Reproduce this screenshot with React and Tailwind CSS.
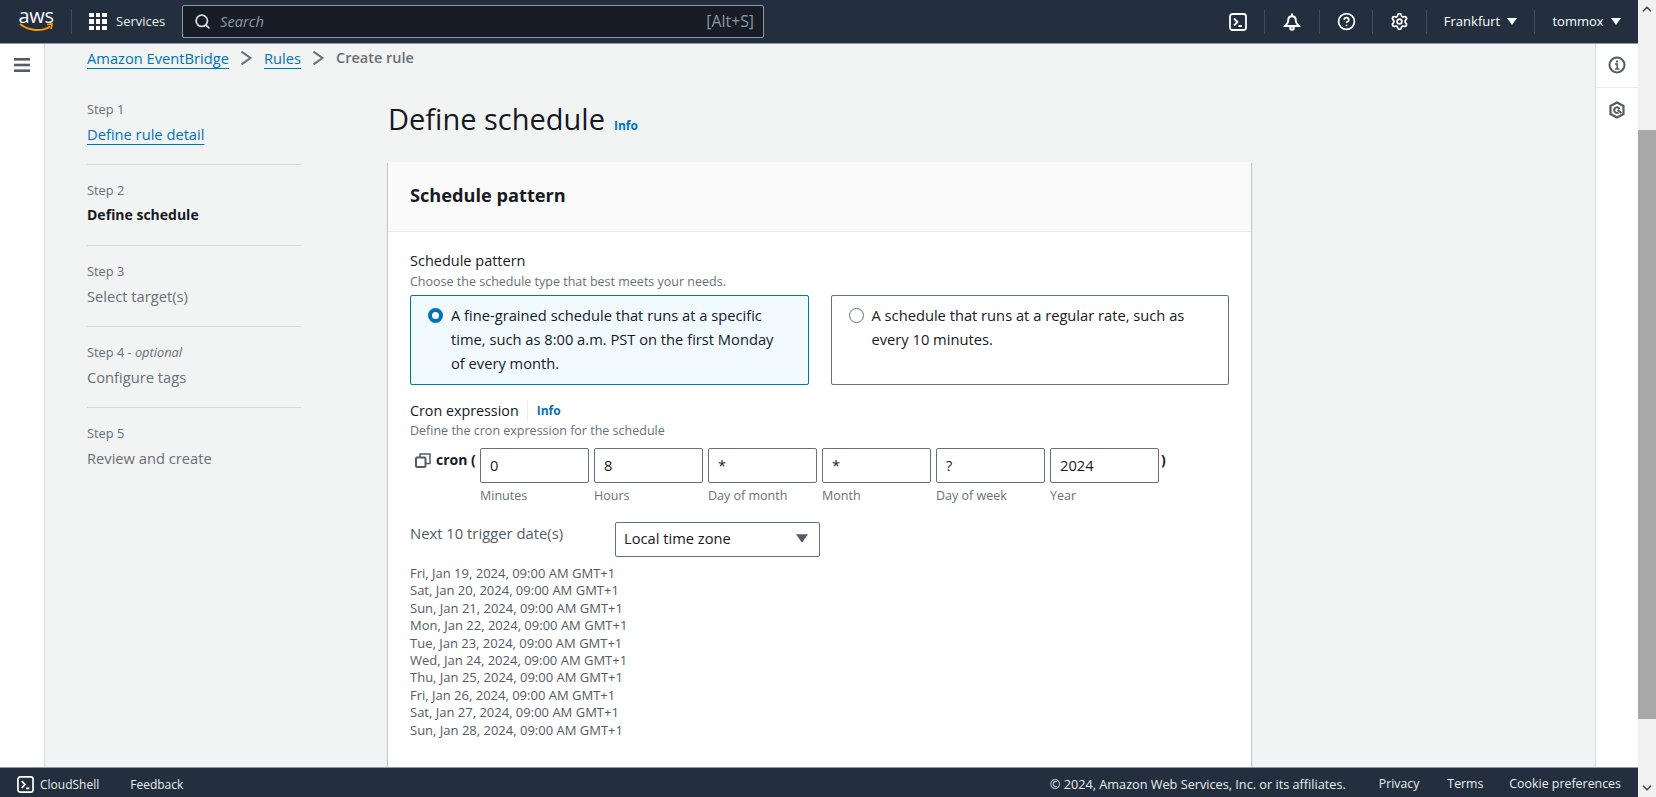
import React from 'react';
import { Search, HelpCircle, Settings, ChevronUp, ChevronDown } from 'lucide-react';

const steps = [
  { step: 'Step 1', label: 'Define rule detail', state: 'link' },
  { step: 'Step 2', label: 'Define schedule', state: 'active' },
  { step: 'Step 3', label: 'Select target(s)' },
  { step: 'Step 4', optional: true, label: 'Configure tags' },
  { step: 'Step 5', label: 'Review and create' },
];

const cronFields = [
  { value: '0', label: 'Minutes' },
  { value: '8', label: 'Hours' },
  { value: '*', label: 'Day of month' },
  { value: '*', label: 'Month' },
  { value: '?', label: 'Day of week' },
  { value: '2024', label: 'Year' },
];

const dates = [
  'Fri, Jan 19, 2024, 09:00 AM GMT+1',
  'Sat, Jan 20, 2024, 09:00 AM GMT+1',
  'Sun, Jan 21, 2024, 09:00 AM GMT+1',
  'Mon, Jan 22, 2024, 09:00 AM GMT+1',
  'Tue, Jan 23, 2024, 09:00 AM GMT+1',
  'Wed, Jan 24, 2024, 09:00 AM GMT+1',
  'Thu, Jan 25, 2024, 09:00 AM GMT+1',
  'Fri, Jan 26, 2024, 09:00 AM GMT+1',
  'Sat, Jan 27, 2024, 09:00 AM GMT+1',
  'Sun, Jan 28, 2024, 09:00 AM GMT+1',
];

function ShellIcon({ size = 18 }) {
  return (
    <svg width={size} height={size} viewBox="0 0 18 18" fill="none" stroke="#fff" strokeWidth="1.8">
      <rect x="1" y="1" width="16" height="16" rx="2.500" />
      <path d="M5 5.500 8.500 9 5 12.500M9.500 13H13" />
    </svg>
  );
}

function BellIcon() {
  return (
    <svg width="18" height="18" viewBox="0 0 18 18" fill="none" stroke="#fff" strokeWidth="2">
      <path d="M9 3.200c-2.800 0-3.800 2-3.800 4.300 0 2.700-1.700 4-3 5.500h13.600c-1.300-1.500-3-2.800-3-5.500C12.800 5.200 11.800 3.200 9 3.200zM9 .5v2.700" />
      <circle cx="9" cy="15" r="1.800" />
    </svg>
  );
}

function InfoIcon() {
  return (
    <svg width="18" height="18" viewBox="0 0 18 18" fill="none" stroke="#545b64" strokeWidth="2">
      <circle cx="9" cy="9" r="7.500" />
      <rect x="8" y="4.500" width="2" height="2" fill="#545b64" stroke="none" />
      <path d="M7 8h2.200v4.500M7 13h4.500" strokeWidth="1.600" />
    </svg>
  );
}

function HexIcon() {
  return (
    <svg width="18" height="18" viewBox="0 0 18 18" fill="none" stroke="#545b64" strokeWidth="2.200">
      <path d="M9 1.500 15.500 5v8L9 16.500 2.500 13V5z" />
      <path d="M11.500 8a2.800 2.800 0 1 0-1 3.500M9.500 9l4 3" strokeWidth="2" />
    </svg>
  );
}

function CopyIcon() {
  return (
    <svg width="16" height="15" viewBox="0 0 16 15" fill="none" stroke="#545b64" strokeWidth="2" className="shrink-0 mt-[3px]">
      <rect x="1" y="4.500" width="9.500" height="9.500" rx="1" />
      <path d="M5 4V1h10v9.500h-4" strokeWidth="1.500" />
    </svg>
  );
}

function Crumb() {
  return (
    <svg width="35" height="14" viewBox="0 0 35 14" fill="none" stroke="#687078" strokeWidth="2" className="shrink-0">
      <path d="M12.500 .6 21.500 7l-9 6.400" />
    </svg>
  );
}

function Caret({ className = 'fill-white', w = 10, h = 7 }) {
  return (
    <svg width={w} height={h} viewBox="0 0 10 7" className={className}>
      <path d="M0 0h10L5 7z" />
    </svg>
  );
}

function Divider() {
  return <div className="w-px h-[24px] bg-[#414d5c]" />;
}

function TopBar() {
  return (
    <header className="h-[44px] shrink-0 bg-[#232f3e] border-b border-[#8d99a8] flex items-center text-white text-[13px]">
      <div className="ml-[19px] w-[34px] flex flex-col items-center">
        <span className="text-[20px] leading-[14px] mt-[-3px] tracking-[-0.3px]">aws</span>
        <svg width="34" height="9" viewBox="0 0 34 9" fill="none">
          <path d="M1 1c9 7 22 8 30 2.500" stroke="#f90" strokeWidth="2" />
          <path d="M28 1.500 33 1l-1 5" stroke="#f90" strokeWidth="1.700" />
        </svg>
      </div>
      <div className="ml-[18px] w-px h-[25px] bg-[#414d5c]" />
      <div className="ml-[17px] grid grid-cols-3 gap-[2px] w-[18px]">
        {[...Array(9)].map((_, i) => <span key={i} className="w-[4.600px] h-[4.600px] bg-white" />)}
      </div>
      <span className="ml-[9px] w-[48px] whitespace-nowrap text-[13px] text-[#eaeded]">Services</span>
      <div className="ml-[18px] w-[582px] h-[33px] bg-[#161d26] border border-[#8d99a8] rounded-[2px] flex items-center pl-[11px] pr-[9px] text-[#8d99a8]">
        <Search size={17} strokeWidth={2.500} className="text-[#d5dbdb]" />
        <span className="ml-[9px] italic text-[14.700px]">Search</span>
        <span className="ml-auto text-[15.800px]">[Alt+S]</span>
      </div>
      <div className="ml-auto flex items-center">
        <div className="w-[52px] flex justify-center"><ShellIcon /></div>
        <Divider />
        <div className="w-[54px] flex justify-center"><BellIcon /></div>
        <Divider />
        <div className="w-[52px] flex justify-center"><HelpCircle size={19} strokeWidth={2.200} /></div>
        <Divider />
        <div className="w-[53px] flex justify-center"><Settings size={19} strokeWidth={2.200} /></div>
        <Divider />
        <div className="w-[107px] flex justify-center items-center gap-[7px]">Frankfurt <Caret /></div>
        <Divider />
        <div className="w-[103px] flex justify-center items-center gap-[7px]">tommox <Caret /></div>
      </div>
    </header>
  );
}

function Steps() {
  return (
    <nav className="w-[214px] shrink-0 mt-[27px]">
      {steps.map((s, i) => (
        <div
          key={s.step}
          className={i === 0 ? 'h-[66px] border-b border-[#d5dbdb]' : i < steps.length - 1 ? 'h-[81px] pt-[15px] border-b border-[#d5dbdb]' : 'h-[81px] pt-[15px]'}
        >
          <div className="text-[12.800px] leading-[20px] text-[#687078]">
            {s.step}{s.optional && <span className="italic"> - optional</span>}
          </div>
          <div className={`mt-[5px] leading-[20px] ${s.state === 'link' ? 'text-[14.700px] text-[#0073bb] underline underline-offset-[4px]' : s.state === 'active' ? 'text-[14px] font-bold text-[#16191f]' : 'text-[14.700px] text-[#687078]'}`}>
            {s.label}
          </div>
        </div>
      ))}
    </nav>
  );
}

function RadioCard({ selected, children }) {
  return (
    <div className={`flex-1 h-[90px] rounded-[2px] border pl-[17px] pr-[24px] pt-[7px] flex gap-[8px] text-[14.700px] leading-[24px] text-[#16191f] ${selected ? 'border-[#0073bb] bg-[#f1faff]' : 'border-[#687078] bg-white'}`}>
      {selected
        ? <span className="mt-[5px] w-[15px] h-[15px] shrink-0 rounded-full border-[4px] border-[#0073bb] bg-white" />
        : <span className="mt-[5px] w-[15px] h-[15px] shrink-0 rounded-full border border-[#687078] bg-white" />}
      <p>{children}</p>
    </div>
  );
}

function SchedulePanel() {
  return (
    <section className="w-[863px] bg-white shadow-[0_1px_1px_0_rgba(0,28,36,0.3),1px_1px_1px_0_rgba(0,28,36,0.15),-1px_1px_1px_0_rgba(0,28,36,0.15)]">
      <div className="h-[70px] bg-[#fafafa] border-b border-[#eaeded] pl-[22px] pb-[2px] flex items-center">
        <h2 className="text-[18.200px] font-bold text-[#16191f]">Schedule pattern</h2>
      </div>
      <div className="px-[22px] pt-[19px] pb-[80px]">
        <div className="text-[14.500px] leading-[20px] text-[#16191f]">Schedule pattern</div>
        <div className="text-[12.500px] leading-[16px] mt-[3px] text-[#687078]">Choose the schedule type that best meets your needs.</div>
        <div className="flex gap-[22px] mt-[5px]">
          <RadioCard selected>A fine-grained schedule that runs at a specific time, such as 8:00 a.m. PST on the first Monday of every month.</RadioCard>
          <RadioCard>A schedule that runs at a regular rate, such as every 10 minutes.</RadioCard>
        </div>

        <div className="mt-[16px] flex items-center text-[14.300px] leading-[20px] text-[#16191f]">
          Cron expression
          <span className="ml-[8px] pl-[9px] border-l border-[#eaeded] text-[12px] font-bold text-[#0073bb]">Info</span>
        </div>
        <div className="text-[12.500px] leading-[16px] mt-[2px] text-[#687078]">Define the cron expression for the schedule</div>

        <div className="flex mt-[9px] pl-[5px]">
          <div className="flex items-start gap-[5px] w-[65px] pt-[2px] text-[14px] font-bold leading-[20px] text-[#16191f]">
            <CopyIcon />
            <span>cron (</span>
          </div>
          <div className="flex gap-[5px]">
            {cronFields.map((f) => (
              <div key={f.label} className="w-[109px]">
                <div className="h-[35px] rounded-[2px] border border-[#687078] bg-white pl-[9px] flex items-center text-[14.700px] text-[#16191f]">{f.value}</div>
                <div className="mt-[5px] text-[12.500px] leading-[16px] text-[#687078]">{f.label}</div>
              </div>
            ))}
          </div>
          <span className="ml-[2px] pt-[2px] text-[14px] font-bold leading-[20px] text-[#16191f]">)</span>
        </div>

        <div className="flex mt-[18px]">
          <div className="w-[205px] pt-[1px] text-[14.800px] leading-[20px] text-[#545b64]">Next 10 trigger date(s)</div>
          <div className="w-[205px] h-[35px] rounded-[2px] border border-[#687078] bg-white pl-[8px] pr-[11px] pb-[2px] flex items-center justify-between text-[14.700px] text-[#16191f]">
            Local time zone
            <Caret className="fill-[#545b64]" w={12} h={9} />
          </div>
        </div>

        <div className="mt-[8px] text-[13px] leading-[17.400px] text-[#545b64]">
          {dates.map((d) => <div key={d}>{d}</div>)}
        </div>
      </div>
    </section>
  );
}

export default function App() {
  return (
    <div className="h-screen w-full flex overflow-hidden bg-[#f2f3f3] font-['Open_Sans',sans-serif]">
      <div className="flex-1 min-w-0 flex flex-col">
        <TopBar />
        <div className="flex-1 min-h-0 flex overflow-hidden">
          <aside className="w-[45px] shrink-0 bg-white border-r border-[#d5dbdb] flex justify-center pt-[14px] pr-[1px]">
            <svg width="16" height="14" viewBox="0 0 16 14" fill="#545b64">
              <rect width="16" height="2.600" />
              <rect y="5.700" width="16" height="2.600" />
              <rect y="11.400" width="16" height="2.600" />
            </svg>
          </aside>
          <main className="flex-1 min-w-0 pl-[42px]">
            <div className="h-[28px] flex items-center text-[14.700px]">
              <span className="text-[#0073bb] underline underline-offset-[4px]">Amazon EventBridge</span>
              <Crumb />
              <span className="text-[#0073bb] underline underline-offset-[4px]">Rules</span>
              <Crumb />
              <span className="text-[14.500px] font-semibold text-[#687078]">Create rule</span>
            </div>
            <div className="flex">
              <Steps />
              <div className="ml-[87px]">
                <div className="mt-[26px] mb-[22px] h-[42px] flex items-center">
                  <h1 className="text-[29px] leading-[36px] text-[#16191f]">Define schedule</h1>
                  <span className="ml-[9px] mt-[13px] text-[12px] font-bold text-[#0073bb]">Info</span>
                </div>
                <SchedulePanel />
              </div>
            </div>
          </main>
          <aside className="w-[43px] shrink-0 bg-white border-l border-[#d5dbdb] flex flex-col">
            <div className="h-[44px] pb-[1px] border-b border-[#eaeded] flex items-center justify-center">
              <InfoIcon />
            </div>
            <div className="h-[44px] flex items-center justify-center">
              <HexIcon />
            </div>
          </aside>
        </div>
        <footer className="h-[30px] shrink-0 bg-[#232f3e] border-t border-[#8d99a8] flex items-center pt-[4px] pl-[17px] pr-[17px] text-[12.300px] text-[#eaeded]">
          <ShellIcon size={17} />
          <span className="ml-[6px] text-[12px]">CloudShell</span>
          <span className="ml-[31px] text-[12px]">Feedback</span>
          <span className="ml-auto text-[12.700px]">© 2024, Amazon Web Services, Inc. or its affiliates.</span>
          <span className="ml-[33px]">Privacy</span>
          <span className="ml-[28px]">Terms</span>
          <span className="ml-[26px] text-[12.400px]">Cookie preferences</span>
        </footer>
      </div>
      <div className="w-[18px] shrink-0 bg-[#f1f1f1] flex flex-col">
        <div className="h-[18px] flex items-center justify-center"><ChevronUp size={14} strokeWidth={3} className="text-[#505050]" /></div>
        <div className="h-[112px]" />
        <div className="h-[589px] bg-[#a8a8a8]" />
        <div className="flex-1" />
        <div className="h-[18px] flex items-center justify-center"><ChevronDown size={14} strokeWidth={3} className="text-[#505050]" /></div>
      </div>
    </div>
  );
}
